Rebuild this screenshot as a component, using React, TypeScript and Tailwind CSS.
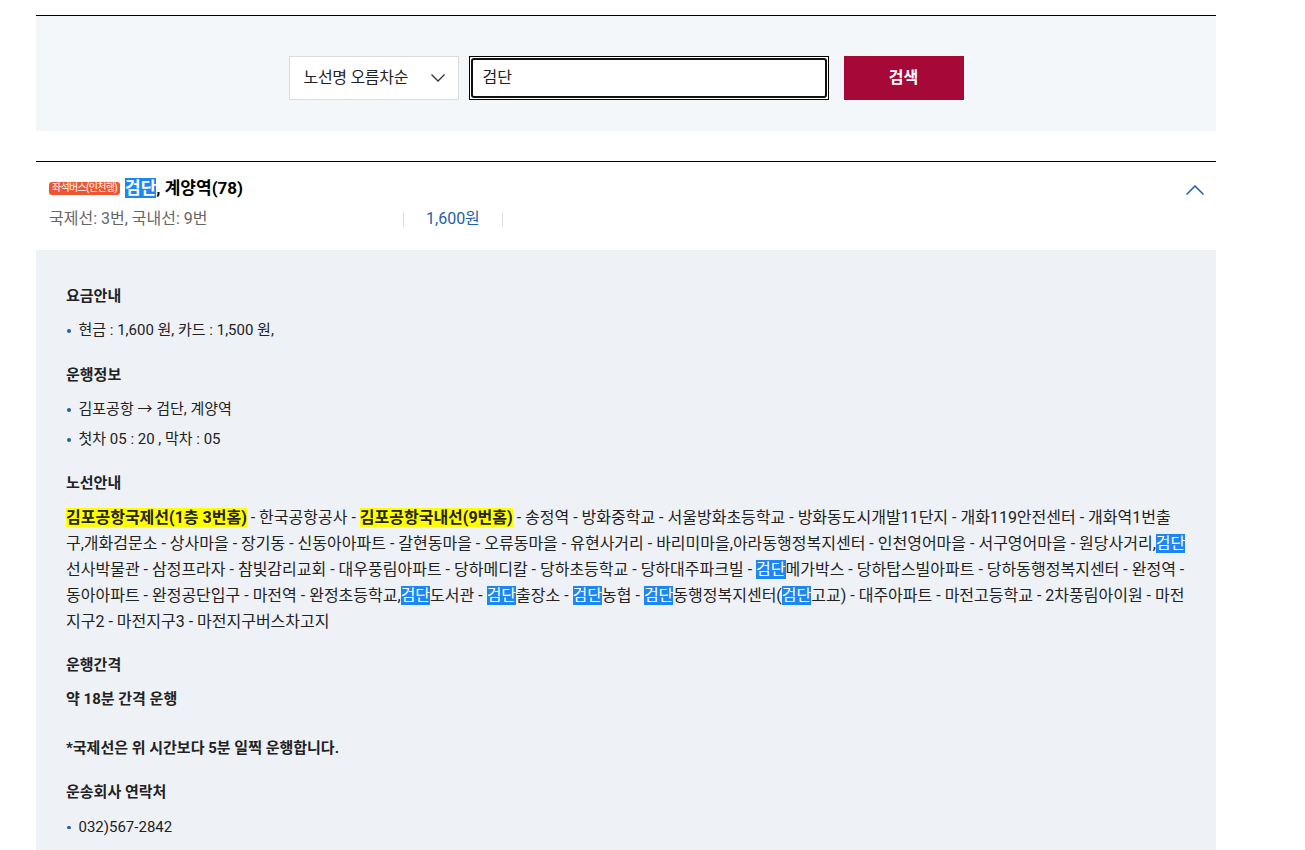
const font = { fontFamily: 'Roboto, "Noto Sans CJK KR", sans-serif' };

function Hl({ children }: { children: string }) {
  return <span className="bg-[#1e86f0] text-white">{children}</span>;
}

function Yl({ children }: { children: string }) {
  return <span className="bg-[#ffff00] font-bold">{children}</span>;
}

function Bullet({ children }: { children: React.ReactNode }) {
  return (
    <li className="flex items-center text-[15px] leading-[22px] text-[#222]">
      <span className="mt-[2px] mr-[8px] ml-px h-[3.5px] w-[3.5px] rounded-full bg-[#1d5fae]" />
      {children}
    </li>
  );
}

function Heading({ children }: { children: string }) {
  return <h4 className="text-[15px] leading-[22px] font-bold text-[#222]">{children}</h4>;
}

export default function App() {
  return (
    <div className="min-h-[850px] bg-white" style={font}>
      <div className="mx-[36px] w-[1180px] pt-[15px]">
        {/* search */}
        <div className="border-t border-black bg-[#f4f7fa] pt-[40px] pb-[31px]">
          <div className="flex justify-center">
            <div className="flex h-[44px] w-[170px] items-center justify-between border border-[#dcdcdc] bg-white pr-[13px] pl-[14px]">
              <span className="text-[16px] tracking-[-0.3px] text-[#222]">노선명 오름차순</span>
              <svg width="14" height="8" viewBox="0 0 14 8" fill="none" stroke="#333" strokeWidth="1.3">
                <polyline points="0.5,0.5 7,7 13.5,0.5" />
              </svg>
            </div>
            <div className="ml-[10px] h-[44px] w-[360px] border border-black bg-white p-px">
              <div className="flex h-full items-center rounded-[3px] border-2 border-[#111] pl-[10px] text-[16px] text-[#222]">
                검단
              </div>
            </div>
            <button className="ml-[15px] flex h-[44px] w-[120px] items-center justify-center bg-[#a60838] text-[16px] font-bold text-white">
              검색
            </button>
          </div>
        </div>

        {/* result header */}
        <div className="mt-[30px] border-t border-black">
          <div className="flex items-start justify-between pt-[14px] pr-[12px] pb-[20px] pl-[13px]">
            <div>
              <div className="flex h-[24px] items-center">
                <span className="mr-[5px] flex h-[13px] items-center rounded-[3px] bg-[#ec5634] px-[3px] text-[10px] leading-none tracking-[-0.7px] text-white">
                  좌석버스(인천행)
                </span>
                <span className="text-[17px] leading-[24px] font-bold text-black">
                  <span className="bg-[#1e86f0] text-white">검단</span>, 계양역(78)
                </span>
              </div>
              <div className="mt-[8px] flex items-center text-[16px] leading-[22px]">
                <span className="w-[354px] text-[#666]">국제선: 3번, 국내선: 9번</span>
                <span className="h-[15px] w-px bg-[#ddd]" />
                <span className="w-[98px] pl-[22px] text-[#1d5fae]">1,600원</span>
                <span className="h-[15px] w-px bg-[#ddd]" />
              </div>
            </div>
            <svg width="18" height="10" viewBox="0 0 18 10" fill="none" stroke="#1d5fae" strokeWidth="1.5" className="mt-[9px]">
              <polyline points="0.5,9.5 9,1 17.5,9.5" />
            </svg>
          </div>

          {/* detail */}
          <div className="bg-[#eef1f6] px-[30px] pt-[35px] pb-[30px]">
            <Heading>요금안내</Heading>
            <ul className="mt-[12px]">
              <Bullet>현금 : 1,600 원, 카드 : 1,500 원,</Bullet>
            </ul>

            <div className="mt-[23px]">
              <Heading>운행정보</Heading>
            </div>
            <ul className="mt-[12px] flex flex-col gap-[8px]">
              <Bullet>김포공항 → 검단, 계양역</Bullet>
              <Bullet>첫차 05 : 20 , 막차 : 05</Bullet>
            </ul>

            <div className="mt-[22px]">
              <Heading>노선안내</Heading>
            </div>
            <p className="mt-[11px] text-[16px] leading-[26px] text-[#222]">
              <Yl>김포공항국제선(1층 3번홈)</Yl> - 한국공항공사 - <Yl>김포공항국내선(9번홈)</Yl> - 송정역 - 방화중학교 - 서울방화초등학교 - 방화동도시개발11단지 - 개화119안전센터 - 개화역1번출구,개화검문소 - 상사마을 - 장기동 - 신동아아파트 - 갈현동마을 - 오류동마을 - 유현사거리 - 바리미마을,아라동행정복지센터 - 인천영어마을 - 서구영어마을 - 원당사거리,<Hl>검단</Hl>선사박물관 - 삼정프라자 - 참빛감리교회 - 대우풍림아파트 - 당하메디칼 - 당하초등학교 - 당하대주파크빌 - <Hl>검단</Hl>메가박스 - 당하탑스빌아파트 - 당하동행정복지센터 - 완정역 - 동아아파트 - 완정공단입구 - 마전역 - 완정초등학교,<Hl>검단</Hl>도서관 - <Hl>검단</Hl>출장소 - <Hl>검단</Hl>농협 - <Hl>검단</Hl>동행정복지센터(<Hl>검단</Hl>고교) - 대주아파트 - 마전고등학교 - 2차풍림아이원 - 마전지구2 - 마전지구3 - 마전지구버스차고지
            </p>

            <div className="mt-[19px]">
              <Heading>운행간격</Heading>
            </div>
            <p className="mt-[11px] text-[15px] leading-[24.5px] font-bold text-[#222]">
              약 18분 간격 운행
              <br />
              <br />
              *국제선은 위 시간보다 5분 일찍 운행합니다.
            </p>

            <div className="mt-[20px]">
              <Heading>운송회사 연락처</Heading>
            </div>
            <ul className="mt-[13px]">
              <Bullet>032)567-2842</Bullet>
            </ul>
          </div>
        </div>
      </div>
    </div>
  );
}
